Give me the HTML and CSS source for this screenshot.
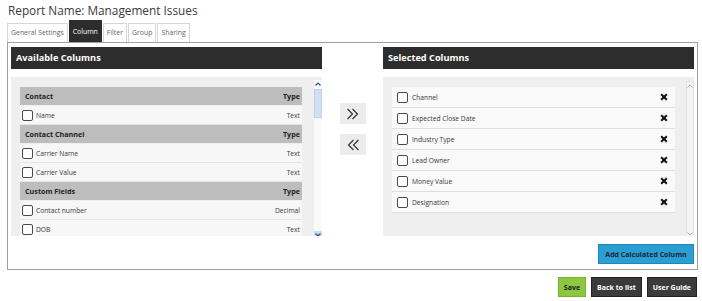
FILE: index.html
```html
<!DOCTYPE html>
<html lang="en">
<head>
  <meta charset="UTF-8" />
  <title>Report - Column</title>
  <link rel="stylesheet" href="styles.css">
</head>
<body>
  <div class="page">
    <h1 class="title">Report Name: Management Issues</h1>

    <nav class="tabs">
      <a class="tab">General Settings</a>
      <a class="tab active">Column</a>
      <a class="tab">Filter</a>
      <a class="tab">Group</a>
      <a class="tab">Sharing</a>
    </nav>

    <div class="box">
      <div class="columns">
        <section class="panel">
          <div class="panel-head">Available Columns</div>
          <div class="panel-body">
            <div class="field-table">
              <div class="row head"><span>Contact</span><span>Type</span></div>
              <div class="row"><label><i class="check"></i>Name</label><span>Text</span></div>
              <div class="row head"><span>Contact Channel</span><span>Type</span></div>
              <div class="row"><label><i class="check"></i>Carrier Name</label><span>Text</span></div>
              <div class="row"><label><i class="check"></i>Carrier Value</label><span>Text</span></div>
              <div class="row head"><span>Custom Fields</span><span>Type</span></div>
              <div class="row"><label><i class="check"></i>Contact number</label><span>Decimal</span></div>
              <div class="row"><label><i class="check"></i>DOB</label><span>Text</span></div>
            </div>
            <div class="scrollbar">
              <span class="sb-btn">
                <svg width="6" height="4" viewBox="0 0 6 4"><path d="M0.5 3.5 L3 1 L5.5 3.5" fill="none" stroke="#2f4f8f" stroke-width="1.2"/></svg>
              </span>
              <span class="sb-thumb"></span>
              <span class="sb-track"></span>
              <span class="sb-btn down">
                <svg width="6" height="4" viewBox="0 0 6 4"><path d="M0.5 0.5 L3 3 L5.5 0.5" fill="none" stroke="#2f4f8f" stroke-width="1.2"/></svg>
              </span>
            </div>
          </div>
        </section>

        <div class="movers">
          <button class="move">
            <svg width="14" height="12" viewBox="0 0 14 12"><path d="M1.5 1 L6.5 6 L1.5 11 M6.5 1 L11.5 6 L6.5 11" fill="none" stroke="#333" stroke-width="1.2"/></svg>
          </button>
          <button class="move">
            <svg width="14" height="12" viewBox="0 0 14 12"><path d="M7.5 1 L2.5 6 L7.5 11 M12.5 1 L7.5 6 L12.5 11" fill="none" stroke="#333" stroke-width="1.2"/></svg>
          </button>
        </div>

        <section class="panel">
          <div class="panel-head">Selected Columns</div>
          <div class="panel-body">
            <ul class="selected">
              <li><label><i class="check"></i>Channel</label><i class="remove"></i></li>
              <li><label><i class="check"></i>Expected Close Date</label><i class="remove"></i></li>
              <li><label><i class="check"></i>Industry Type</label><i class="remove"></i></li>
              <li><label><i class="check"></i>Lead Owner</label><i class="remove"></i></li>
              <li><label><i class="check"></i>Money Value</label><i class="remove"></i></li>
              <li><label><i class="check"></i>Designation</label><i class="remove"></i></li>
            </ul>
            <div class="scrollbar off">
              <span class="sb-btn">
                <svg width="6" height="4" viewBox="0 0 6 4"><path d="M0.5 3.5 L3 1 L5.5 3.5" fill="none" stroke="#b5b5b5" stroke-width="1"/></svg>
              </span>
              <span class="sb-track"></span>
              <span class="sb-btn">
                <svg width="6" height="4" viewBox="0 0 6 4"><path d="M0.5 0.5 L3 3 L5.5 0.5" fill="none" stroke="#b5b5b5" stroke-width="1"/></svg>
              </span>
            </div>
          </div>
        </section>
      </div>

      <div class="box-foot">
        <button class="btn blue">Add Calculated Column</button>
      </div>
    </div>

    <div class="actions">
      <button class="btn green">Save</button>
      <button class="btn dark">Back to list</button>
      <button class="btn dark">User Guide</button>
    </div>
  </div>
</body>
</html>
```

FILE: styles.css
```css
* {
  box-sizing: border-box;
}

html, body {
  margin: 0;
  padding: 0;
  background: #fff;
  font-family: 'Open Sans', 'Liberation Sans', sans-serif;
  color: #333;
}

.page {
  width: 702px;
  height: 301px;
  overflow: hidden;
}

.title {
  margin: 0;
  padding: 3px 0 0 8px;
  height: 20px;
  font-size: 11.8px;
  line-height: 15px;
  font-weight: 400;
  color: #3a3a3a;
}

/* tabs */
.tabs {
  display: flex;
  align-items: flex-end;
  gap: 1px;
  height: 22px;
  padding-left: 7px;
}

.tab {
  height: 19px;
  padding: 0 3px;
  border: 1px solid #d6d6d6;
  border-bottom: none;
  font-size: 6.9px;
  line-height: 18px;
  color: #666;
  background: #fff;
}

.tab.active {
  height: 22px;
  line-height: 21px;
  background: #2d2d2d;
  border-color: #2d2d2d;
  color: #fff;
}

/* main box */
.box {
  margin-left: 7px;
  width: 691px;
  height: 228px;
  border: 1px solid #a0a0a0;
  padding: 4px 3px 4px;
}

.columns {
  display: flex;
}

.panel {
  width: 311px;
}

.panel-head {
  height: 22px;
  padding-left: 5px;
  background: #2d2d2d;
  color: #fff;
  font-size: 9.2px;
  font-weight: 700;
  line-height: 22px;
}

.panel-body {
  display: flex;
  margin-top: 8px;
  height: 159px;
  background: #efefef;
  padding: 10px 0 0 9px;
  overflow: hidden;
}

/* available fields */
.field-table {
  width: 282px;
  flex-shrink: 0;
}

.row {
  display: flex;
  justify-content: space-between;
  align-items: center;
  height: 19px;
  padding: 0 2px;
  background: #f7f7f7;
  border-bottom: 1px solid #e4e4e4;
  font-size: 6.7px;
  color: #3d3445;
}

.row.head {
  background: #bdbdbd;
  border-bottom: 1px solid #efefef;
  padding: 0 2px 0 5px;
  font-weight: 700;
  font-size: 7.2px;
  color: #222;
}

.row label {
  display: flex;
  align-items: center;
}

.check {
  display: inline-block;
  width: 11px;
  height: 11px;
  margin-right: 3px;
  border: 1px solid #4a4a4a;
  border-radius: 2px;
  background: #fff;
}

/* fake scrollbars */
.scrollbar {
  display: flex;
  flex-direction: column;
  width: 8px;
  margin-left: auto;
  margin-top: -7px;
  height: 159px;
  background: #fafafa;
}

.sb-btn {
  display: flex;
  align-items: center;
  justify-content: center;
  height: 8px;
  background: #fafafa;
}

.sb-btn.down {
  background: #c9dbf5;
}

.sb-thumb {
  height: 29px;
  margin: 1px 0;
  background: #cfe0f7;
  border: 1px solid #bcd2f0;
}

.sb-track {
  flex: 1;
}

.scrollbar.off {
  margin-top: -6px;
  height: 158px;
  border: 1px solid #e2e2e2;
  background: #f4f4f4;
}

.scrollbar.off .sb-btn {
  background: #f4f4f4;
}

/* selected fields */
.selected {
  list-style: none;
  margin: 0;
  padding: 0;
  width: 283px;
  flex-shrink: 0;
}

.selected li {
  display: flex;
  justify-content: space-between;
  align-items: center;
  height: 21px;
  padding: 0 8px 0 5px;
  background: #f9f9f9;
  border-bottom: 1px solid #dedede;
  font-size: 6.7px;
  color: #3d3445;
}

.selected label {
  display: flex;
  align-items: center;
}

.selected .check {
  margin-right: 4px;
}

.remove {
  position: relative;
  width: 6px;
  height: 6px;
}

.remove::before,
.remove::after {
  content: "";
  position: absolute;
  left: -1px;
  top: 2px;
  width: 8px;
  height: 2px;
  background: #111;
  transform: rotate(45deg);
}

.remove::after {
  transform: rotate(-45deg);
}

/* move buttons */
.movers {
  width: 61px;
  display: flex;
  flex-direction: column;
  align-items: center;
  gap: 10px;
  padding-top: 56px;
}

.move {
  width: 26px;
  height: 21px;
  padding: 0;
  border: none;
  background: #ececec;
  display: flex;
  align-items: center;
  justify-content: center;
}

/* buttons */
.box-foot {
  display: flex;
  justify-content: flex-end;
  margin-top: 8px;
}

.btn {
  height: 20px;
  padding: 0 5px;
  border: 1px solid transparent;
  font-family: 'Open Sans', 'Liberation Sans', sans-serif;
  font-size: 7px;
  font-weight: 700;
  white-space: nowrap;
  cursor: pointer;
}

.btn.blue {
  width: 96px;
  padding: 0;
  background: #2b9fd4;
  border-color: #1e87b8;
  color: #1a2630;
}

.actions {
  display: flex;
  justify-content: flex-end;
  gap: 5px;
  padding: 7px 5px 0 0;
}

.btn.green {
  background: #8dc63f;
  border-color: #7ab02f;
  color: #1a1a1a;
}

.btn.dark {
  background: #3b3b3b;
  border-color: #222;
  color: #fff;
}
```
